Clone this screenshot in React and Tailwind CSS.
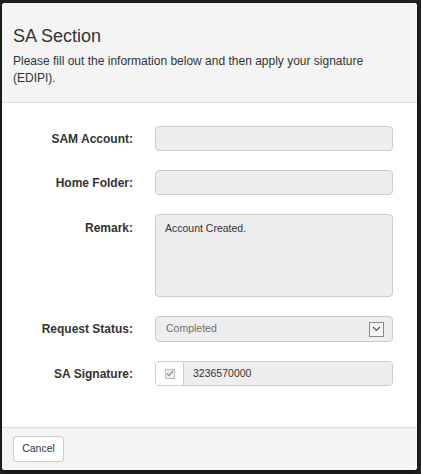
export default function App() {
  const font = { fontFamily: '"Liberation Sans", Arial, sans-serif' };
  return (
    <div className="min-h-[474px] w-[421px] bg-[#222222] pt-[3px] pl-[2px]" style={font}>
      <div className="w-[415px] overflow-hidden rounded-[3px] bg-white shadow-[0_3px_9px_rgba(0,0,0,0.5)]">
        {/* Header */}
        <div className="border-b border-[#dddddd] bg-[#f4f4f4] px-[11px] pt-[20px] pb-[15px]">
          <h4 className="m-0 text-[18px] leading-[26px] font-normal text-[#333333]">SA Section</h4>
          <p className="mt-[4px] text-[12px] leading-[17px] text-[#333333]">
            Please fill out the information below and then apply your signature (EDIPI).
          </p>
        </div>

        {/* Body */}
        <div className="flex flex-col gap-[19px] pt-[23px] pb-[41px] text-[12px] text-[#333333]">
          <div className="flex items-center">
            <label className="w-[131px] text-right font-bold">SAM Account:</label>
            <div className="ml-[22px] h-[25px] w-[238px] rounded-[4px] border border-[#cccccc] bg-[#eeeeee]" />
          </div>
          <div className="flex items-center">
            <label className="w-[131px] text-right font-bold">Home Folder:</label>
            <div className="ml-[22px] h-[25px] w-[238px] rounded-[4px] border border-[#cccccc] bg-[#eeeeee]" />
          </div>
          <div className="flex items-start">
            <label className="w-[131px] pt-[7px] text-right font-bold leading-[14px]">Remark:</label>
            <div className="ml-[22px] h-[83px] w-[238px] rounded-[4px] border border-[#cccccc] bg-[#eeeeee] px-[9px] pt-[7px] text-[10.5px] leading-[13px]">
              Account Created.
            </div>
          </div>
          <div className="flex items-center">
            <label className="w-[131px] text-right font-bold">Request Status:</label>
            <div className="ml-[22px] flex h-[26px] w-[238px] items-center justify-between rounded-[4px] border border-[#cccccc] bg-[#eeeeee] pl-[10px] pr-[8px]">
              <span className="text-[10.5px] text-[#6f6f6f]">Completed</span>
              <span className="flex h-[15px] w-[15px] items-center justify-center border border-[#8a8a8a] bg-[#f4f4f4]">
                <svg width="9" height="6" viewBox="0 0 9 6" fill="none">
                  <path d="M1 1 L4.5 4.5 L8 1" stroke="#555555" strokeWidth="1.2" />
                </svg>
              </span>
            </div>
          </div>
          <div className="flex items-center">
            <label className="w-[131px] text-right font-bold">SA Signature:</label>
            <div className="ml-[22px] flex h-[25px] w-[238px] overflow-hidden rounded-[4px] border border-[#cccccc]">
              <div className="flex w-[28px] items-center justify-center border-r border-[#cccccc] bg-white">
                <span className="flex h-[10px] w-[10px] items-center justify-center border border-[#bbbbbb] bg-[#f0f0f0]">
                  <svg width="8" height="7" viewBox="0 0 8 7" fill="none">
                    <path d="M1 3.5 L3 5.5 L7 1" stroke="#9a9a9a" strokeWidth="1.4" />
                  </svg>
                </span>
              </div>
              <div className="flex flex-1 items-center bg-[#eeeeee] pl-[9px] text-[10.5px]">3236570000</div>
            </div>
          </div>
        </div>

        {/* Footer */}
        <div className="border-t border-[#dddddd] bg-[#f4f4f4] px-[11px] pt-[7px] pb-[8px]">
          <button className="h-[26px] w-[51px] rounded-[3px] border border-[#cccccc] bg-white text-[10.5px] text-[#333333]" style={font}>
            Cancel
          </button>
        </div>
      </div>
    </div>
  );
}
